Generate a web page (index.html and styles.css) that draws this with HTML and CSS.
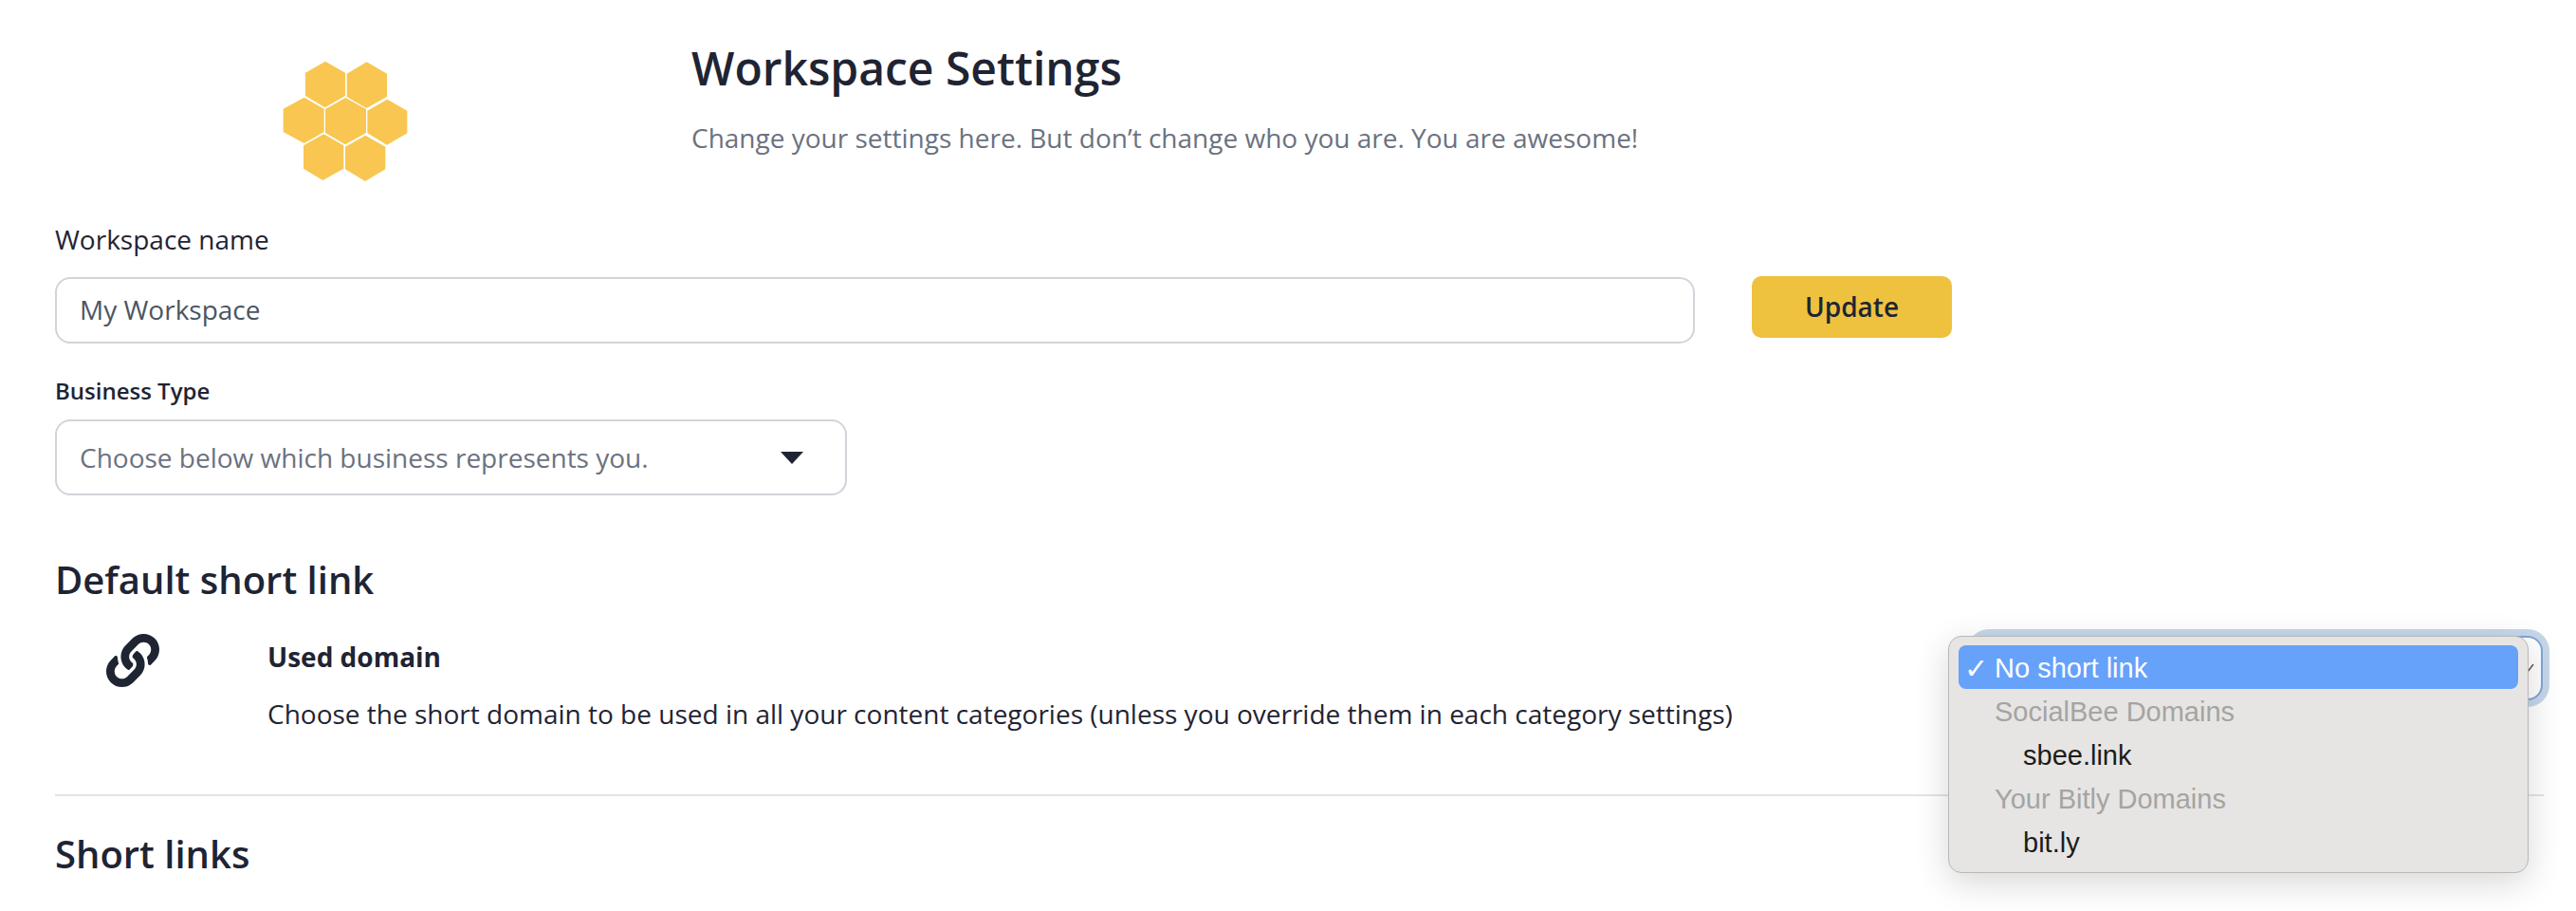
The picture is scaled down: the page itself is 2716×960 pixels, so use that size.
FILE: index.html
```html
<!DOCTYPE html>
<html lang="en">
<head>
<meta charset="utf-8">
<title>Workspace Settings</title>
<link rel="stylesheet" href="styles.css">
</head>
<body>
<main class="page">
  <header class="header">
    <svg class="logo" viewBox="0 0 600 510" aria-hidden="true">
      <polygon points="249,74 312,110 312,183 248,220 186,183 186,110"/>
      <polygon points="380,76 444,113 444,186 379,222 317,186 317,113"/>
      <polygon points="182,188 245,224 245,297 182,333 116,297 116,224"/>
      <polygon points="313,189 378,225 378,300 312,337 249,300 249,225"/>
      <polygon points="445,194 508,230 508,301 444,338 382,301 382,230"/>
      <polygon points="244,304 307,340 307,413 241,450 180,413 180,340"/>
      <polygon points="376,308 439,344 439,415 375,453 312,415 312,344"/>
    </svg>
    <div class="header-text">
      <h1 class="title">Workspace Settings</h1>
      <p class="subtitle">Change your settings here. But don’t change who you are. You are awesome!</p>
    </div>
  </header>

  <label class="field-label">Workspace name</label>
  <div class="name-row">
    <div class="input">My Workspace</div>
    <button class="update">Update</button>
  </div>

  <label class="type-label">Business Type</label>
  <div class="type-select">
    <span>Choose below which business represents you.</span>
    <span class="caret"></span>
  </div>

  <h2 class="section first">Default short link</h2>
  <section class="domain-row">
    <svg class="link-icon" viewBox="0 0 512 512" aria-hidden="true"><path d="M326.612 185.391c59.747 59.809 58.927 155.698.36 214.59-.11.12-.24.25-.36.37l-67.2 67.2c-59.27 59.27-155.699 59.262-214.96 0-59.27-59.26-59.27-155.7 0-214.96l37.106-37.106c9.84-9.84 26.786-3.3 27.294 10.606.648 17.722 3.826 35.527 9.69 52.721 1.986 5.822.567 12.262-3.783 16.612l-13.087 13.087c-28.026 28.026-28.905 73.66-1.155 101.96 28.024 28.579 74.086 28.749 102.325.51l67.2-67.19c28.191-28.191 28.073-73.757 0-101.83-3.701-3.694-7.429-6.564-10.341-8.569a16.037 16.037 0 0 1-6.947-12.606c-.396-10.567 3.348-21.456 11.698-29.806l21.054-21.055c5.521-5.521 14.182-6.199 20.584-1.731a152.482 152.482 0 0 1 20.522 17.197zM467.547 44.449c-59.261-59.262-155.69-59.27-214.96 0l-67.2 67.2c-.12.12-.25.25-.36.37-58.566 58.892-59.387 154.781.36 214.59a152.454 152.454 0 0 0 20.521 17.196c6.402 4.468 15.064 3.789 20.584-1.731l21.054-21.055c8.35-8.35 12.094-19.239 11.698-29.806a16.037 16.037 0 0 0-6.947-12.606c-2.912-2.005-6.64-4.875-10.341-8.569-28.073-28.073-28.191-73.639 0-101.83l67.2-67.19c28.239-28.239 74.3-28.069 102.325.51 27.75 28.3 26.872 73.934-1.155 101.96l-13.087 13.087c-4.35 4.35-5.769 10.79-3.783 16.612 5.864 17.194 9.042 34.999 9.69 52.721.509 13.906 17.454 20.446 27.294 10.606l37.106-37.106c59.271-59.259 59.271-155.699.001-214.959z"/></svg>
    <div class="domain-text">
      <div class="domain-title">Used domain</div>
      <div class="domain-desc">Choose the short domain to be used in all your content categories (unless you override them in each category settings)</div>
    </div>
    <div class="domain-select">
      <svg class="chevron" viewBox="0 0 8 8" aria-hidden="true"><path d="M0 8 L6 0"/></svg>
      <ul class="menu">
        <li class="opt selected"><span class="check">✓</span>No short link</li>
        <li class="group">SocialBee Domains</li>
        <li class="opt child">sbee.link</li>
        <li class="group">Your Bitly Domains</li>
        <li class="opt child">bit.ly</li>
      </ul>
    </div>
  </section>
  <hr class="rule">
  <h2 class="section">Short links</h2>
</main>
</body>
</html>
```

FILE: styles.css
```css
* { box-sizing: border-box; }
html, body { margin: 0; height: 100%; background: #fff; overflow: hidden; }
body { font-family: "Open Sans", sans-serif; color: #1f2433; }
.page { padding-left: 58px; padding-right: 30px; }

.header { display: flex; height: 222px; padding-top: 40px; padding-left: 202px; }
.logo { width: 200px; height: 170px; fill: #f8c651; flex: none; }
.header-text { margin-left: 269px; }
.title { margin: 0; padding-top: 2px; font-size: 48px; line-height: 60px; font-weight: 600; }
.subtitle { margin: 23px 0 0; font-size: 28px; line-height: 40px; color: #6b7280; }

.field-label { display: block; font-size: 28px; line-height: 40px; height: 70px; padding-top: 10px; }
.name-row { display: flex; align-items: flex-start; gap: 60px; }
.input {
  width: 1729px; height: 70px; border: 2px solid #d1d5db; border-radius: 16px;
  padding-left: 24px; font-size: 28px; line-height: 64px; color: #4b5563;
}
.update {
  width: 211px; height: 65px; margin-top: -1px; padding: 0 0 2px; border: 0; border-radius: 10px; background: #eec23f;
  font: 600 28px "Open Sans", sans-serif; color: #1f2433;
}

.type-label { display: block; margin-top: 33px; font-size: 24px; line-height: 34px; font-weight: 600; }
.type-select {
  display: flex; align-items: center; justify-content: space-between;
  width: 835px; height: 80px; margin-top: 13px; padding: 0 44px 0 24px;
  border: 2px solid #d1d5db; border-radius: 16px; font-size: 28px; color: #6b7280;
}
.caret { width: 0; height: 0; border: 12px solid transparent; border-top: 13px solid #1f2433; border-bottom: 0; }

.section { margin: 0; font-size: 40px; line-height: 54px; font-weight: 600; }
.section.first { margin-top: 62px; }

.domain-row { display: flex; height: 199px; padding-top: 30px; position: relative; align-items: flex-start; }
.link-icon { width: 56px; height: 56px; margin: 0 0 0 54px; fill: #1f2433; flex: none; }
.domain-text { margin-left: 114px; margin-top: 4px; flex: 1; }
.domain-title { font-size: 28px; line-height: 40px; font-weight: 700; }
.domain-desc { margin-top: 20px; font-size: 28px; line-height: 40px; }

.domain-select {
  position: absolute; left: 2023px; top: 32px; width: 600px; height: 68px;
  border: 2px solid #7fa6d8; border-radius: 16px; background: #fff;
  box-shadow: 0 0 0 7px #c6d7ea;
}
.chevron { position: absolute; right: 6px; top: 28px; width: 8px; height: 8px; fill: none; stroke: #555; stroke-width: 1.5; }
.menu {
  position: absolute; left: -29px; top: -2px; width: 612px; height: 250px; margin: 0; padding: 9px 10px;
  list-style: none; background: #e6e5e3; border-radius: 14px; border: 1px solid #b9b8b6;
  box-shadow: 0 10px 36px rgba(0,0,0,.16);
  font-family: "Liberation Sans", sans-serif; font-size: 29px; color: #1c1c1c;
}
.menu li { height: 46px; line-height: 48px; padding-left: 38px; white-space: nowrap; }
.menu .selected { position: relative; background: #66a1fa; color: #fff; border-radius: 8px; }
.check { position: absolute; left: 6px; top: 1px; font-family: "DejaVu Sans", sans-serif; font-size: 30px; }
.menu .group { color: #a5a4a2; }
.menu .child { padding-left: 68px; }

.rule { margin: 0; width: 2624px; height: 2px; border: 0; background: #e3e3e3; }
.section:last-child { margin-top: 34px; }
```
